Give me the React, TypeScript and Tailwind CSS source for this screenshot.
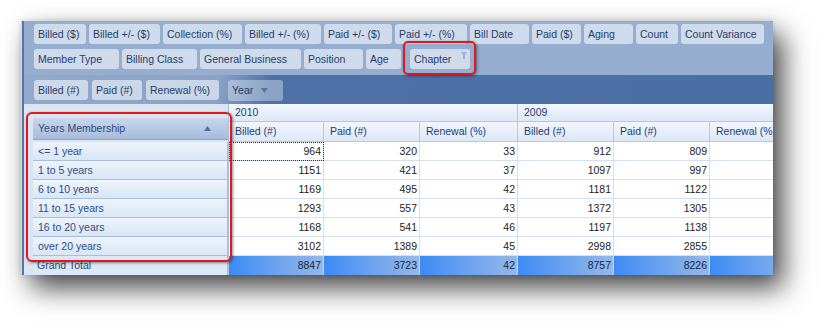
import React from "react";

const dataFields: [string, string][] = [
  ["Billed ($)", "w-[52px]"],
  ["Billed +/- ($)", "w-[71px]"],
  ["Collection (%)", "w-[79px]"],
  ["Billed +/- (%)", "w-[76px]"],
  ["Paid +/- ($)", "w-[68px]"],
  ["Paid +/- (%)", "w-[72px]"],
  ["Bill Date", "w-[59px]"],
  ["Paid ($)", "w-[49px]"],
  ["Aging", "w-[49px]"],
  ["Count", "w-[42px]"],
  ["Count Variance", "w-[83px]"],
];

const filterFields: [string, string][] = [
  ["Member Type", "w-[85px]"],
  ["Billing Class", "w-[75px]"],
  ["General Business", "w-[101px]"],
  ["Position", "w-[59px]"],
  ["Age", "w-[35px]"],
];

const rows: [string, number[]][] = [
  ["<= 1 year", [964, 320, 33, 912, 809]],
  ["1 to 5 years", [1151, 421, 37, 1097, 997]],
  ["6 to 10 years", [1169, 495, 42, 1181, 1122]],
  ["11 to 15 years", [1293, 557, 43, 1372, 1305]],
  ["16 to 20 years", [1168, 541, 46, 1197, 1138]],
  ["over 20 years", [3102, 1389, 45, 2998, 2855]],
];
const totals = [8847, 3723, 42, 8757, 8226];
const measures = ["Billed (#)", "Paid (#)", "Renewal (%)"];

function FieldButton({ label, w, children }: { label: string; w: string; children?: React.ReactNode }) {
  return (
    <div className={`flex h-[20px] shrink-0 items-center rounded-[3px] bg-white/55 pl-[4px] text-[#223e6d] ${w}`}>
      <span className="whitespace-nowrap">{label}</span>
      {children}
    </div>
  );
}

function Tri({ up, color }: { up?: boolean; color: string }) {
  return (
    <svg width="7" height="5" viewBox="0 0 7 5" className="shrink-0">
      <path d={up ? "M0 5 L3.5 0 L7 5 Z" : "M0 0 L7 0 L3.5 5 Z"} fill={color} />
    </svg>
  );
}

export default function App() {
  const headCell =
    "flex items-center border-r border-b border-[#b6c9e4] bg-gradient-to-b from-[#f3f7fd] to-[#dce7f6] pl-[6px] text-[#1f3d73] whitespace-nowrap overflow-hidden";
  const dataCell =
    "flex items-center justify-end border-r border-b border-[#d3e0f1] bg-white pr-[2px] text-[#1c1c1c]";

  return (
    <div className="relative h-[330px] w-[828px] overflow-hidden bg-white pl-[21px] pt-[21px] font-['Liberation_Sans',Arial,sans-serif] text-[10.5px] leading-none">
      {/* WINDOW */}
      <div className="flex h-[254px] w-[752px] overflow-hidden shadow-[10px_13px_26px_rgba(0,0,0,0.72),0_0_6px_rgba(0,0,0,0.15)]">
        <div className="w-[1px] bg-[#cfd8e5]" />
        <div className="w-[2px] bg-[#5274aa]" />

        <div className="flex min-w-0 flex-1 flex-col">
          {/* FIELD LIST */}
          <div className="bg-[#95aed0] pb-[6px] pl-[10px] pt-[3px]">
            <div className="flex gap-[3px]">
              {dataFields.map(([l, w]) => (
                <FieldButton key={l} label={l} w={w} />
              ))}
            </div>
            <div className="mt-[5px] flex gap-[3px]">
              {filterFields.map(([l, w]) => (
                <FieldButton key={l} label={l} w={w} />
              ))}
              <div className="ml-[6px] flex">
                <FieldButton label="Chapter" w="w-[60px]">
                  <svg width="6" height="7" viewBox="0 0 6 7" className="mb-[7px] ml-auto mr-[3px]">
                    <path d="M0 0 H6 L4 3 V7 H2 V3 Z" fill="#9db2d3" />
                  </svg>
                </FieldButton>
              </div>
            </div>
          </div>

          {/* DATA / COLUMN AREA */}
          <div className="flex h-[29px] items-start bg-[linear-gradient(100deg,#90a9cc_0%,#89a2c6_26%,#4d71a7_33%,#4a6fa5_100%)] pl-[10px] pt-[5px]">
            <div className="flex gap-[4px]">
              <FieldButton label="Billed (#)" w="w-[54px]" />
              <FieldButton label="Paid (#)" w="w-[50px]" />
              <FieldButton label="Renewal (%)" w="w-[73px]" />
            </div>
            <div className="ml-[9px] flex h-[21px] w-[55px] items-center rounded-[3px] bg-white/35 pl-[4px] text-[#233c66]">
              <span>Year</span>
              <span className="ml-auto mr-[15px]">
                <Tri color="#56729f" />
              </span>
            </div>
          </div>

          {/* PIVOT */}
          <div className="flex flex-1">
            {/* ROW AREA */}
            <div className="w-[204px] shrink-0 bg-[#dbe5f2] pl-[9px] pt-[14px]">
              <div className="flex h-[22px] items-center rounded-t-[2px] border-b border-[#8ea8cf] bg-gradient-to-b from-[#c8d6ea] to-[#a6bcdb] pl-[5px] text-[#2e4a7c]">
                <span>Years Membership</span>
                <span className="ml-auto mr-[17px]">
                  <Tri up color="#506e9f" />
                </span>
              </div>
              <div className="mt-[2px]">
                {rows.map(([l]) => (
                  <div
                    key={l}
                    className="flex h-[19px] items-center border-b border-r border-[#a8bfdf] bg-gradient-to-b from-[#eef4fc] to-[#d9e6f6] pl-[5px] text-[#2f4c85]"
                  >
                    {l}
                  </div>
                ))}
                <div className="flex h-[19px] items-center border-r border-[#a8bfdf] bg-[#dde8f7] pl-[4px] text-[#2b4676]">
                  Grand Total
                </div>
              </div>
            </div>

            {/* CELLS */}
            <div className="min-w-0 flex-1 overflow-hidden border-l border-[#a9c0df]">
              <div className="grid w-[579px] grid-cols-[95px_96px_98px_96px_96px_98px] grid-rows-[18px_20px_repeat(7,19px)]">
                <div className={`${headCell} col-span-3`}>2010</div>
                <div className={`${headCell} col-span-3`}>2009</div>
                {[...measures, ...measures].map((m, i) => (
                  <div key={i} className={headCell}>
                    {m}
                  </div>
                ))}
                {rows.map(([l, v], r) =>
                  [...v, null].map((n, c) => (
                    <div
                      key={`${l}-${c}`}
                      className={`${dataCell} ${
                        r === 0 && c === 0 ? "outline outline-1 -outline-offset-1 outline-dotted outline-[#333]" : ""
                      }`}
                    >
                      {n}
                    </div>
                  ))
                )}
                {[...totals, null].map((n, c) => (
                  <div
                    key={`t-${c}`}
                    className="flex items-center justify-end border-r border-[#c6d8f0] bg-gradient-to-r from-[#3a8bf5] to-[#95b8e8] pr-[2px] text-[#1b283f]"
                  >
                    {n}
                  </div>
                ))}
              </div>
            </div>
          </div>
        </div>
      </div>

      {/* CALLOUTS */}
      <div className="absolute left-[403px] top-[41px] h-[34px] w-[73px] rounded-[5px] border-2 border-[#e3151d] shadow-[1px_1px_3px_rgba(0,0,0,0.45)]" />
      <div className="absolute left-[26px] top-[112px] h-[150px] w-[206px] rounded-[6px] border-2 border-[#e3151d] shadow-[1px_1px_3px_rgba(0,0,0,0.45)]" />
    </div>
  );
}
